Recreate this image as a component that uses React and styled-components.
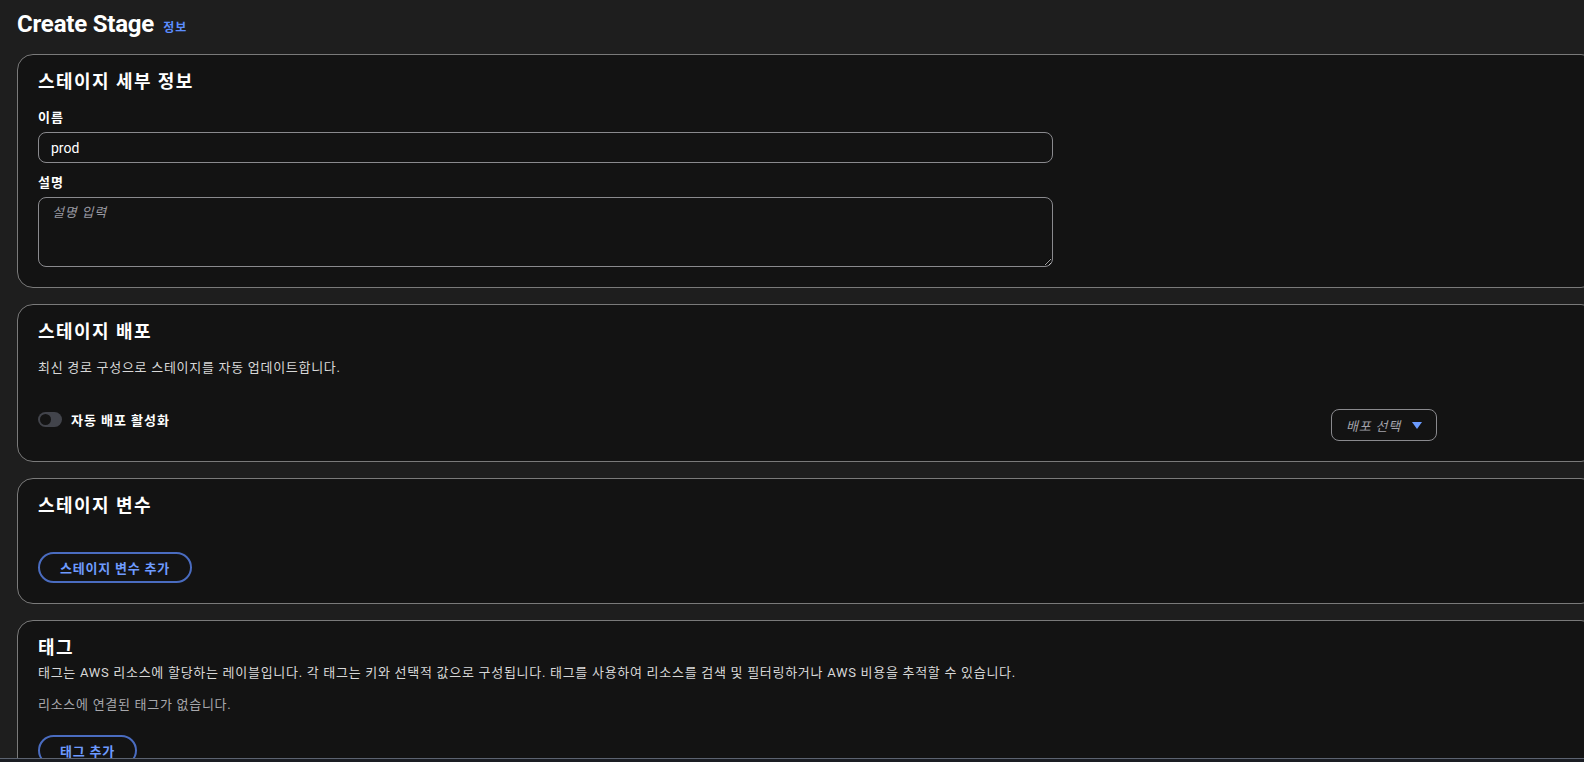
import styled, { createGlobalStyle } from 'styled-components';
import { useState } from 'react';

const GlobalStyle = createGlobalStyle`
	html, body {
		margin: 0;
		padding: 0;
		background-color: #1e1e1e;
		overflow: hidden;
	}

	body {
		font-family: Roboto, 'Noto Sans CJK KR', sans-serif;
		color: #ffffff;
		letter-spacing: 0.06em;
	}

	* {
		box-sizing: border-box;
	}
`;

export default function App() {
	const [autoDeploy, setAutoDeploy] = useState(false);
	const [name, setName] = useState('prod');

	return (
		<>
			<GlobalStyle />
			<Page>
				<TitleRow>
					<Title>Create Stage</Title>
					<InfoLink href="#">정보</InfoLink>
				</TitleRow>

				<Cards>
					<Card>
						<CardTitle>스테이지 세부 정보</CardTitle>
						<Field $top={15}>
							<Label>이름</Label>
							<Input value={name} onChange={(e) => setName(e.target.value)} />
						</Field>
						<Field $top={11}>
							<Label>설명</Label>
							<TextArea placeholder="설명 입력" />
						</Field>
					</Card>

					<Card>
						<CardTitle>스테이지 배포</CardTitle>
						<Description $gap={14}>최신 경로 구성으로 스테이지를 자동 업데이트합니다.</Description>
						<DeployRow>
							<ToggleLabel>
								<Toggle type="button" $on={autoDeploy} onClick={() => setAutoDeploy(!autoDeploy)}>
									<Knob $on={autoDeploy} />
								</Toggle>
								자동 배포 활성화
							</ToggleLabel>
							<Select type="button">
								배포 선택
								<Caret viewBox="0 0 10 7">
									<path d="M0 0 H10 L5 7 Z" fill="#6b9bff" />
								</Caret>
							</Select>
						</DeployRow>
					</Card>

					<Card>
						<CardTitle>스테이지 변수</CardTitle>
						<PillButton $top={34}>스테이지 변수 추가</PillButton>
					</Card>

					<Card>
						<CardTitle>태그</CardTitle>
						<Description $gap={3}>
							태그는 AWS 리소스에 할당하는 레이블입니다. 각 태그는 키와 선택적 값으로 구성됩니다. 태그를 사용하여 리소스를 검색 및 필터링하거나 AWS 비용을 추적할 수 있습니다.
						</Description>
						<Muted>리소스에 연결된 태그가 없습니다.</Muted>
						<PillButton $top={20}>태그 추가</PillButton>
					</Card>
				</Cards>
			</Page>
			<Footer />
		</>
	);
}

const Page = styled.main`
	padding: 8px 0 40px 17px;
`;

const TitleRow = styled.div`
	display: flex;
	align-items: baseline;
	gap: 9px;
	margin-bottom: 14px;
`;

const Title = styled.h1`
	margin: 0;
	font-size: 24px;
	line-height: 32px;
	font-weight: 700;
	letter-spacing: -0.2px;
`;

const InfoLink = styled.a`
	font-size: 12px;
	font-weight: 700;
	color: #5c8dff;
	text-decoration: none;
`;

const Cards = styled.div`
	display: flex;
	flex-direction: column;
	gap: 16px;
`;

const Card = styled.section`
	width: 1580px;
	background-color: #131313;
	border: 1px solid #7a7a7a;
	border-radius: 16px;
	padding: 14px 20px 20px 20px;
	display: flex;
	flex-direction: column;
	align-items: flex-start;
`;

const CardTitle = styled.h2`
	margin: 0;
	font-size: 18px;
	line-height: 25px;
	font-weight: 700;
	letter-spacing: 0.08em;
	color: #ffffff;
`;

const Field = styled.div`
	display: flex;
	flex-direction: column;
	gap: 5px;
	margin-top: ${(p) => p.$top}px;
`;

const Label = styled.label`
	font-size: 13px;
	line-height: 18px;
	font-weight: 700;
	color: #ffffff;
`;

const Input = styled.input`
	width: 1015px;
	height: 31px;
	padding: 0 12px;
	background-color: #131313;
	border: 1px solid #8a8a8e;
	border-radius: 8px;
	color: #ffffff;
	font-family: inherit;
	font-size: 14px;
	letter-spacing: normal;
	outline: none;
`;

const TextArea = styled.textarea`
	width: 1015px;
	height: 70px;
	padding: 5px 13px;
	background-color: #131313;
	border: 1px solid #8a8a8e;
	border-radius: 8px;
	color: #ffffff;
	font-family: inherit;
	font-size: 13px;
	line-height: 20px;
	letter-spacing: 0.06em;
	outline: none;
	resize: vertical;

	&::placeholder {
		color: #9a9aa2;
		font-style: italic;
	}
`;

const Description = styled.p`
	margin: ${(p) => p.$gap}px 0 0 0;
	font-size: 13px;
	line-height: 20px;
	letter-spacing: 0.055em;
	color: #d8d8d8;
`;

const Muted = styled.p`
	margin: 12px 0 0 0;
	font-size: 13px;
	line-height: 20px;
	letter-spacing: 0.055em;
	color: #a8a8ad;
`;

const DeployRow = styled.div`
	width: 1399px;
	margin-top: 31px;
	display: flex;
	justify-content: space-between;
	align-items: flex-start;
`;

const ToggleLabel = styled.div`
	display: flex;
	align-items: center;
	gap: 9px;
	height: 20px;
	font-size: 13px;
	font-weight: 700;
	color: #ffffff;
`;

const Toggle = styled.button`
	position: relative;
	width: 24px;
	height: 15px;
	padding: 0;
	border: none;
	border-radius: 8px;
	background-color: ${(p) => (p.$on ? '#5c8dff' : '#42444b')};
	cursor: pointer;
`;

const Knob = styled.span`
	position: absolute;
	top: 2px;
	left: ${(p) => (p.$on ? '11px' : '2px')};
	width: 11px;
	height: 11px;
	border-radius: 50%;
	background-color: #141414;
`;

const Select = styled.button`
	display: flex;
	align-items: center;
	gap: 11px;
	height: 32px;
	padding: 0 14px;
	background-color: #131313;
	border: 1px solid #8a8a8e;
	border-radius: 8px;
	color: #a2a2aa;
	font-family: inherit;
	font-size: 13px;
	font-style: italic;
	letter-spacing: 0.06em;
	cursor: pointer;
`;

const Caret = styled.svg`
	width: 10px;
	height: 7px;
	margin-top: 1px;
`;

const PillButton = styled.button`
	margin-top: ${(p) => p.$top}px;
	height: 31px;
	padding: 0 20px;
	background-color: transparent;
	border: 2px solid #4a6cc0;
	border-radius: 16px;
	color: #6e9bff;
	font-family: inherit;
	font-size: 13px;
	font-weight: 700;
	letter-spacing: 0.06em;
	cursor: pointer;
`;

const Footer = styled.footer`
	position: fixed;
	left: 0;
	right: 0;
	bottom: 0;
	height: 4px;
	background-color: #1a1d23;
	border-top: 1px solid #5c6370;
`;
